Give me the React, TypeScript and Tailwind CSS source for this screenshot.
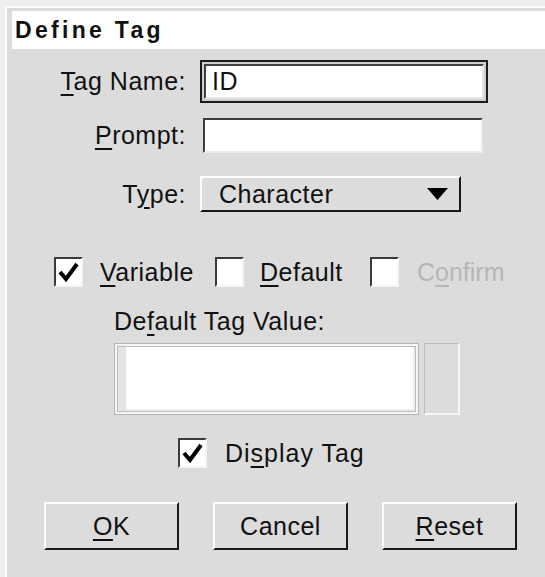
import React from "react";

// underlined access key letter, Windows dialog style
function Key({ children }: { children: React.ReactNode }) {
  return <span className="underline decoration-2 underline-offset-[4px]">{children}</span>;
}

function CheckBox({ checked = false }: { checked?: boolean }) {
  return (
    <span className="flex h-[30px] w-[29px] shrink-0 border-t-2 border-l-2 border-r-2 border-b-2 border-t-[#3a3a3a] border-l-[#3a3a3a] border-r-[#f4f4f4] border-b-[#f4f4f4] bg-white">
      {checked && (
        <svg width="25" height="26" viewBox="0 0 25 26">
          <polyline points="4,13 10,20 21,5" fill="none" stroke="#000" strokeWidth="4" />
        </svg>
      )}
    </span>
  );
}

function Button({ children }: { children: React.ReactNode }) {
  return (
    <div className="flex h-[48px] w-[135px] items-center justify-center border-t-2 border-l-2 border-r-2 border-b-2 border-t-white border-l-white border-r-[#1a1a1a] border-b-[#1a1a1a] bg-[#dcdcdc]">
      <span>{children}</span>
    </div>
  );
}

export default function App() {
  return (
    <div className="h-[577px] w-[545px] overflow-hidden bg-[#efefef] pl-[5px] pt-[6px] font-['Liberation_Sans',Arial,sans-serif] text-[25px] leading-[29px] tracking-[0.5px] text-[#111]">
      <div className="h-full border-l-2 border-t-2 border-[#fbfbfb] bg-[#dcdcdc]">
        {/* title bar */}
        <div className="ml-[5px] mt-[3px] flex h-[38px] items-center bg-white pl-[3px] text-[23px] font-bold tracking-[3.3px]">
          Define Tag
        </div>

        {/* Tag Name (focused field) */}
        <div className="mt-[11px] flex items-center">
          <span className="w-[179px] text-right">
            <Key>T</Key>ag Name:
          </span>
          <div className="ml-[14px] border-2 border-[#1c1c1c] bg-[#cfcfcf] p-[2px]">
            <div className="flex h-[35px] w-[280px] items-center border-t-2 border-l-2 border-r-2 border-b-2 border-t-[#404040] border-l-[#404040] border-r-[#e4e4e4] border-b-[#e4e4e4] bg-white pl-[6px]">
              ID
            </div>
          </div>
        </div>

        {/* Prompt */}
        <div className="mt-[15px] flex items-center">
          <span className="w-[179px] text-right">
            <Key>P</Key>rompt:
          </span>
          <div className="ml-[17px] h-[35px] w-[280px] border-t-2 border-l-2 border-r-2 border-b-2 border-t-[#3c3c3c] border-l-[#3c3c3c] border-r-[#ececec] border-b-[#ececec] bg-white" />
        </div>

        {/* Type dropdown */}
        <div className="mt-[23px] flex items-center">
          <span className="w-[179px] text-right">
            T<Key>y</Key>pe:
          </span>
          <div className="ml-[14px] flex h-[36px] w-[261px] items-center justify-between border-t-2 border-l-2 border-r-2 border-b-2 border-t-white border-l-white border-r-[#1a1a1a] border-b-[#1a1a1a] bg-[#dcdcdc] pl-[17px] pr-[11px]">
            <span>Character</span>
            <svg width="21" height="12" viewBox="0 0 21 12">
              <polygon points="0,0 21,0 10.5,12" fill="#000" />
            </svg>
          </div>
        </div>

        {/* option checkboxes */}
        <div className="mt-[45px] flex items-center pl-[47px]">
          <div className="flex w-[161px] items-center">
            <CheckBox checked />
            <span className="ml-[17px]">
              <Key>V</Key>ariable
            </span>
          </div>
          <div className="flex w-[155px] items-center">
            <CheckBox />
            <span className="ml-[16px]">
              <Key>D</Key>efault
            </span>
          </div>
          <div className="flex items-center">
            <CheckBox />
            <span className="ml-[18px] tracking-[0px] text-[#b6b6b6]">
              C<Key>o</Key>nfirm
            </span>
          </div>
        </div>

        {/* default value */}
        <div className="mt-[20px] pl-[107px]">
          De<Key>f</Key>ault Tag Value:
        </div>
        <div className="mt-[7px] flex gap-[5px] pl-[107px]">
          <div className="flex h-[72px] w-[305px] border border-[#b4b4b4] bg-[#f6f6f6] p-[2px]">
            <div className="flex flex-1 border border-[#bcbcbc]">
              <div className="w-[8px] bg-[#e4e4e4]" />
              <div className="flex-1 border-b-2 border-r-2 border-[#ececec] bg-white" />
            </div>
          </div>
          <div className="h-[72px] w-[36px] border-t border-l border-r-2 border-b-2 border-t-[#bcbcbc] border-l-[#bcbcbc] border-r-[#f6f6f6] border-b-[#f6f6f6] bg-[#dcdcdc]" />
        </div>

        {/* display tag */}
        <div className="mt-[23px] flex items-center pl-[171px]">
          <CheckBox checked />
          <span className="ml-[18px] tracking-[1px]">
            Di<Key>s</Key>play Tag
          </span>
        </div>

        {/* action buttons */}
        <div className="mt-[34px] flex gap-[34px] pl-[37px]">
          <Button>
            <Key>O</Key>K
          </Button>
          <Button>Cancel</Button>
          <Button>
            <Key>R</Key>eset
          </Button>
        </div>
      </div>
    </div>
  );
}
